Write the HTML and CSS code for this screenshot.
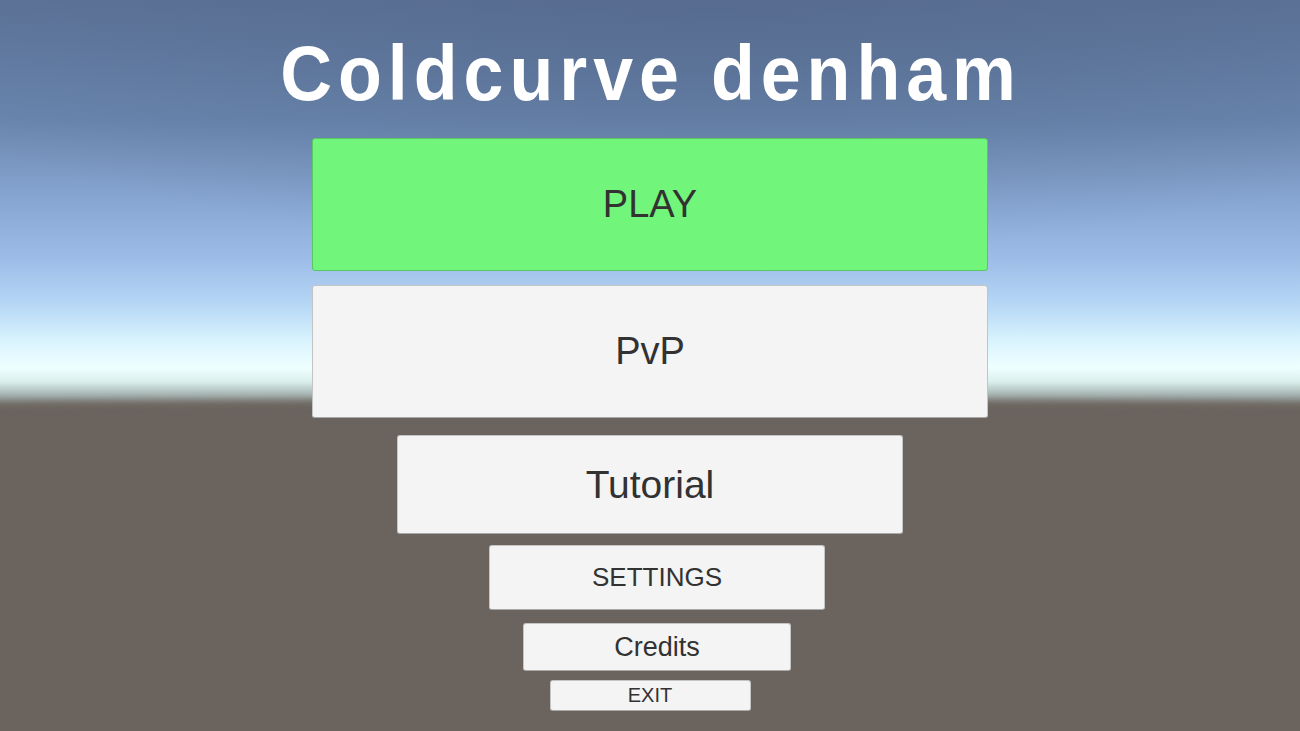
FILE: index.html
```html
<!DOCTYPE html>
<html lang="en">
<head>
    <meta charset="UTF-8">
    <meta name="viewport" content="width=device-width, initial-scale=1">
    <title>Coldcurve denham</title>
    <link rel="stylesheet" href="styles.css">
</head>
<body>
<div class="menu">
    <div class="sky"></div>
    <div class="ground"></div>

    <h1 class="title">Coldcurve denham</h1>

    <div class="buttons">
        <button class="btn btn-play">PLAY</button>
        <button class="btn btn-pvp">PvP</button>
        <button class="btn btn-tutorial">Tutorial</button>
        <button class="btn btn-settings">SETTINGS</button>
        <button class="btn btn-credits">Credits</button>
        <button class="btn btn-exit">EXIT</button>
    </div>
</div>
</body>
</html>
```

FILE: styles.css
```css
body {
    margin: 0;
    padding: 0;
    overflow: hidden;
    font-family: "Liberation Sans", Arial, sans-serif;
}

.menu {
    position: relative;
    width: 100%;
    height: 731px;
    overflow: hidden;
    display: flex;
    flex-direction: column;
    align-items: center;
    background: #6a635e;
}

/* skybox */
.sky {
    position: absolute;
    left: 0;
    top: 0;
    width: 100%;
    height: 420px;
    background:
        radial-gradient(ellipse 70% 60% at 55% 0%, rgba(80, 100, 135, 0.55), rgba(80, 100, 135, 0) 100%),
        linear-gradient(to bottom,
            #5d7398 0px,
            #6a86ae 120px,
            #87a6d2 200px,
            #9dbde8 260px,
            #b6d7f5 305px,
            #d8f3fd 340px,
            #efffff 368px,
            #d9eeea 382px,
            #a4b2b0 395px,
            #7b7772 404px,
            #6a635e 412px);
}

/* curved horizon */
.ground {
    position: absolute;
    left: -40%;
    top: 402px;
    width: 180%;
    height: 900px;
    border-radius: 50% 50% 0 0 / 22px 22px 0 0;
    background: #6a635e;
    filter: blur(5px);
}

.title {
    position: relative;
    margin: 28px 0 0 2px;
    font-size: 78px;
    line-height: 90px;
    font-weight: bold;
    letter-spacing: 6.5px;
    color: #ffffff;
    white-space: nowrap;
    transform: scaleX(0.92);
}

.buttons {
    position: relative;
    display: flex;
    flex-direction: column;
    align-items: center;
    margin-top: 20px;
}

.btn {
    display: flex;
    justify-content: center;
    align-items: center;
    padding: 0;
    font-family: "Liberation Sans", Arial, sans-serif;
    color: #323232;
    background: #f4f4f4;
    border: 1px solid #c4c4c4;
    border-bottom-color: #a9a9a9;
    border-radius: 3px;
    cursor: pointer;
}

.btn-play {
    width: 676px;
    height: 133px;
    font-size: 38px;
    background: #71f57b;
    border-color: #58c661;
}

.btn-pvp {
    width: 676px;
    height: 133px;
    margin-top: 14px;
    font-size: 38px;
}

.btn-tutorial {
    width: 506px;
    height: 99px;
    margin-top: 17px;
    font-size: 39px;
}

.btn-settings {
    width: 336px;
    height: 65px;
    margin-top: 11px;
    margin-left: 14px;
    font-size: 26px;
}

.btn-credits {
    width: 268px;
    height: 48px;
    margin-top: 13px;
    margin-left: 14px;
    font-size: 27px;
}

.btn-exit {
    width: 201px;
    height: 31px;
    margin-top: 9px;
    font-size: 20px;
}
```
